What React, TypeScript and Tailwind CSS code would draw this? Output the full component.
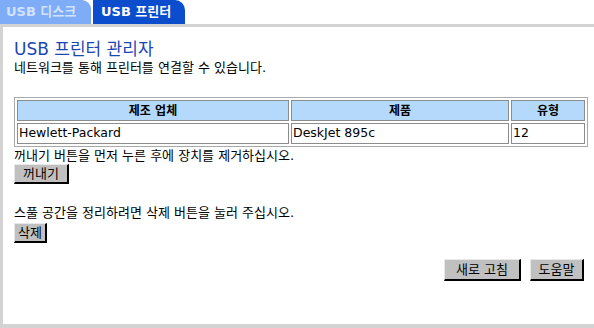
import React from "react";

const kr = { fontFamily: '"DejaVu Sans", "Noto Sans CJK KR", sans-serif' };

function Btn({ children, className = "" }: { children: React.ReactNode; className?: string }) {
  return (
    <button
      className={
        "h-[20px] bg-[#c0c0c0] border-t border-l border-t-[#e8e8e8] border-l-[#e8e8e8] border-r-2 border-b-2 border-r-black border-b-black text-[13px] text-black leading-none " +
        className
      }
      style={kr}
    >
      {children}
    </button>
  );
}

export default function App() {
  return (
    <div className="w-[594px] h-[328px] bg-white flex flex-col overflow-hidden" style={kr}>
      <div className="flex items-end h-[24px] shrink-0">
        <div className="w-[91px] h-[24px] bg-[#7eacf6] rounded-tr-[9px] flex items-center pl-[6px] text-[13px] font-bold text-[#d2e2ff]">
          USB 디스크
        </div>
        <div className="ml-[2px] w-[92px] h-[24px] bg-[#0b4dcc] rounded-tr-[10px] flex items-center pl-[8px] text-[13px] font-bold text-white">
          USB 프린터
        </div>
      </div>
      <div className="flex-1 border-t-[3px] border-l-[3px] border-b-[4px] border-[#d3d3d3] pl-[11px] pr-[6px] pt-[12px]">
        <div className="text-[17px] text-[#1b46b5] leading-[20px]">USB 프린터 관리자</div>
        <div className="text-[13px] text-black leading-[16px] mt-[1px]">네트워크를 통해 프린터를 연결할 수 있습니다.</div>
        <table className="mt-[21px] w-full border border-[#a8a8a8] border-separate border-spacing-[2px] text-[12.5px]">
          <thead>
            <tr className="h-[21px]">
              <th className="bg-[#b5d9fb] border border-[#8c8c8c] font-bold w-[272px] text-[12px]">제조 업체</th>
              <th className="bg-[#b5d9fb] border border-[#8c8c8c] font-bold w-[218px] text-[12px]">제품</th>
              <th className="bg-[#b5d9fb] border border-[#8c8c8c] font-bold text-[12px]">유형</th>
            </tr>
          </thead>
          <tbody>
            <tr className="h-[19px]">
              <td className="border border-[#8c8c8c] pl-[1px] font-normal">Hewlett-Packard</td>
              <td className="border border-[#8c8c8c] pl-[1px]">DeskJet 895c</td>
              <td className="border border-[#8c8c8c] pl-[1px]">12</td>
            </tr>
          </tbody>
        </table>
        <div className="text-[13px] leading-[16px] mt-[1px]">꺼내기 버튼을 먼저 누른 후에 장치를 제거하십시오.</div>
        <div className="mt-[0px] flex">
          <Btn className="px-[8px]">꺼내기</Btn>
        </div>
        <div className="text-[13px] leading-[16px] mt-[21px]">스풀 공간을 정리하려면 삭제 버튼을 눌러 주십시오.</div>
        <div className="mt-[2px] flex">
          <Btn className="px-[3px]">삭제</Btn>
        </div>
        <div className="flex justify-end gap-[9px] mt-[16px] pr-[4px]">
          <Btn className="w-[77px] h-[22px]">새로 고침</Btn>
          <Btn className="w-[54px] h-[22px]">도움말</Btn>
        </div>
      </div>
    </div>
  );
}
